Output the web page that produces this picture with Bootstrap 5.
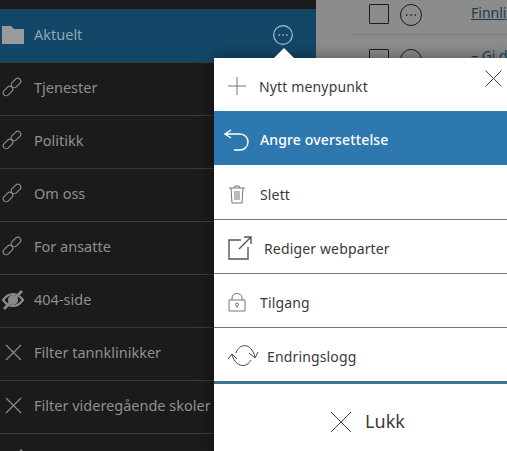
<!DOCTYPE html>
<html lang="no">
<head>
  <meta charset="UTF-8" />
  <meta name="viewport" content="width=device-width, initial-scale=1.0"/>
  <link href="https://cdn.jsdelivr.net/npm/bootstrap@5.3.1/dist/css/bootstrap.min.css" rel="stylesheet"/>
  <title>Meny</title>
  <style>
    html, body { height: 451px; overflow: hidden; }
    body { font-family: "Noto Sans", "Open Sans", sans-serif; font-size: 14px; background: #8c8c8c; }
    .page-wrap { height: 451px; position: relative; overflow: hidden; }

    .side-tree { width: 316px; flex: none; background: #1b1b1b; padding-top: 9px; height: 451px; }
    .tree-row { height: 53px; border-bottom: 1px solid #3a3a3a; color: #8f8f8f; padding: 0 0 3px 1px; font-size: 14.5px; }
    .tree-row.is-open { height: 54px; background: #124767; color: #8ea6b5; padding-bottom: 2px; }
    .tree-ico { width: 24px; height: 24px; flex: none; margin-right: 9px; fill: none; stroke: #8a8a8a; stroke-width: 1.4; }
    .link-ico { width: 20px; height: 20px; margin: 0 12px 2px 1px; stroke-width: 1.2; }
    .dots-ico { width: 20px; height: 20px; margin-left: auto; margin-right: 23px; fill: none; stroke: #a9bfcc; stroke-width: 1.2; }

    .back-list { flex: 1; padding: 4px 0 0 36px; color: #222; }
    .back-row { height: 31px; padding-left: 17px; border-bottom: 1px solid #7d7d7d; }
    .back-row + .back-row { height: 53px; padding-top: 14px; border-bottom: 0; }
    .back-check { width: 20px; height: 20px; border: 1px solid #1c1c1c; border-radius: 1px; flex: none; margin-right: 11px; }
    .back-ico { width: 22px; height: 22px; flex: none; fill: none; stroke: #1c1c1c; stroke-width: 1; }
    .back-link { color: #1d3c4f; margin-left: 49px; margin-top: -2px; white-space: nowrap; }
    .back-row + .back-row .back-link { margin-top: -4px; }

    .ctx-menu { position: absolute; left: 214px; top: 58px; width: 293px; height: 393px; background: #fff; color: #3a3a3a; box-shadow: 0 0 14px rgba(0, 0, 0, .45); }
    .ctx-menu::before { content: ""; position: absolute; left: 60px; top: -10px; border: 10px solid transparent; border-top: 0; border-bottom-color: #fff; }
    .ctx-item { height: 54px; border-bottom: 1px solid #777; padding: 3px 0 0 14px; letter-spacing: .15px; }
    .ctx-item.first { height: 53px; border-bottom: 0; }
    .ctx-item.active-item { background: #2d78ae; color: #fff; border-bottom: 0; font-weight: 500; }
    .ctx-item.slett-item { height: 55px; padding-top: 5px; }
    .ctx-item.last-item { border-bottom: 3px solid #3b7391; height: 56px; }
    .ctx-ico { flex: none; fill: none; stroke: #666; stroke-width: .9; }
    .active-item .ctx-ico { stroke: #fff; stroke-width: 1.4; }
    .ctx-close { position: absolute; right: 4px; top: 11px; width: 19px; height: 19px; padding: 0; border: 0; background: none; }
    .ctx-close svg, .lukk-btn svg { display: block; fill: none; stroke: #444; stroke-width: 1; }
    .lukk-btn { height: 67px; width: 100%; border: 0; background: #fff; color: #3a3a3a; font-size: 18px; padding: 8px 0 0 14px; gap: 13px; }
  </style>
</head>
<body>
  <div class="page-wrap d-flex">
    <div class="side-tree">
      <div class="tree-row is-open d-flex align-items-center">
        <svg class="tree-ico" viewBox="0 0 24 24" style="stroke:none;fill:#9a9a9a"><path d="M1 3h9l3 3h10v15H1z"/></svg>
        <span>Aktuelt</span>
        <svg class="dots-ico" viewBox="0 0 20 20"><circle cx="10" cy="10" r="9.300"/><path d="M5.500 10h1.400M9.300 10h1.400M13.100 10h1.400" stroke-width="1.600"/></svg>
      </div>
      <div class="tree-row d-flex align-items-center"><svg class="tree-ico link-ico" viewBox="0 0 20 20"><rect x="0.500" y="11" width="11" height="6" rx="3" transform="rotate(-45 6 14)"/><rect x="8.500" y="3" width="11" height="6" rx="3" transform="rotate(-45 14 6)"/></svg><span>Tjenester</span></div>
      <div class="tree-row d-flex align-items-center"><svg class="tree-ico link-ico" viewBox="0 0 20 20"><rect x="0.500" y="11" width="11" height="6" rx="3" transform="rotate(-45 6 14)"/><rect x="8.500" y="3" width="11" height="6" rx="3" transform="rotate(-45 14 6)"/></svg><span>Politikk</span></div>
      <div class="tree-row d-flex align-items-center"><svg class="tree-ico link-ico" viewBox="0 0 20 20"><rect x="0.500" y="11" width="11" height="6" rx="3" transform="rotate(-45 6 14)"/><rect x="8.500" y="3" width="11" height="6" rx="3" transform="rotate(-45 14 6)"/></svg><span>Om oss</span></div>
      <div class="tree-row d-flex align-items-center"><svg class="tree-ico link-ico" viewBox="0 0 20 20"><rect x="0.500" y="11" width="11" height="6" rx="3" transform="rotate(-45 6 14)"/><rect x="8.500" y="3" width="11" height="6" rx="3" transform="rotate(-45 14 6)"/></svg><span>For ansatte</span></div>
      <div class="tree-row d-flex align-items-center"><svg class="tree-ico" viewBox="0 0 24 24" style="stroke-width:2.200"><path d="M2 12c3-4 6-6 10-6s7 2 10 6c-3 4-6 6-10 6s-7-2-10-6z"/><circle cx="12" cy="12" r="4" fill="#8a8a8a"/><path d="M3 21L21 3" stroke-width="2.600"/></svg><span>404-side</span></div>
      <div class="tree-row d-flex align-items-center"><svg class="tree-ico" viewBox="0 0 24 24" style="stroke-width:1.200"><path d="M5 4l15 15M20 4L5 19"/></svg><span>Filter tannklinikker</span></div>
      <div class="tree-row d-flex align-items-center"><svg class="tree-ico" viewBox="0 0 24 24" style="stroke-width:1.200"><path d="M5 4l15 15M20 4L5 19"/></svg><span>Filter videregående skoler</span></div>
      <div class="tree-row d-flex align-items-center"><svg class="tree-ico" viewBox="0 0 24 24" style="stroke-width:2.200"><path d="M2 12c3-4 6-6 10-6s7 2 10 6c-3 4-6 6-10 6s-7-2-10-6z"/><path d="M3 21L21 3" stroke-width="2.600"/></svg><span></span></div>
    </div>

    <div class="back-list">
      <div class="back-row d-flex align-items-start">
        <div class="back-check"></div>
        <svg class="back-ico" viewBox="0 0 22 22"><circle cx="11" cy="11" r="10.500"/><path d="M6 11h1.400M10.300 11h1.400M14.600 11h1.400" stroke-width="1.600"/></svg>
        <a class="back-link" href="#">Finnli</a>
      </div>
      <div class="back-row d-flex align-items-start">
        <div class="back-check"></div>
        <svg class="back-ico" viewBox="0 0 22 22"><circle cx="11" cy="11" r="10.500"/></svg>
        <a class="back-link" href="#">– Gi d</a>
      </div>
    </div>

    <div class="ctx-menu">
      <button class="ctx-close" type="button" aria-label="Lukk"><svg width="19" height="19" viewBox="0 0 19 19"><path d="M1.500 1.500l16 16M17.500 1.500l-16 16"/></svg></button>
      <div class="ctx-item first d-flex align-items-center" style="gap:13px">
        <svg class="ctx-ico" width="18" height="18" viewBox="0 0 18 18"><path d="M9 0v18M0 9h18"/></svg><span>Nytt menypunkt</span>
      </div>
      <div class="ctx-item active-item d-flex align-items-center" style="gap:11px;padding-left:10px">
        <svg class="ctx-ico" width="25" height="22" viewBox="0 0 25 22"><path d="M7 1L1 5l6 4M1 5h15a8 8 0 0 1 0 16h-6"/></svg><span>Angre oversettelse</span>
      </div>
      <div class="ctx-item slett-item d-flex align-items-center" style="gap:14px">
        <svg class="ctx-ico" width="18" height="19" viewBox="0 0 18 19"><path d="M1 3h16M6 3l1-2h4l1 2M3 3l1 15h10l1-15M7 6v9M9 6v9M11 6v9"/></svg><span>Slett</span>
      </div>
      <div class="ctx-item d-flex align-items-center" style="gap:12px">
        <svg class="ctx-ico" width="24" height="24" viewBox="0 0 24 24" style="stroke-width:1.400;stroke:#555"><path d="M13 4H1v19h19V11M11 13L23 1M16 1h7v7"/></svg><span>Rediger webparter</span>
      </div>
      <div class="ctx-item d-flex align-items-center" style="gap:14px">
        <svg class="ctx-ico" width="18" height="20" viewBox="0 0 18 20"><path d="M1 8h16v11H1zM4 8V6c0-6 10-6 10 0v2"/><circle cx="9" cy="12.500" r="1.500"/><path d="M9 14v2"/></svg><span>Tilgang</span>
      </div>
      <div class="ctx-item last-item d-flex align-items-center" style="gap:8px;padding-left:13px">
        <svg class="ctx-ico" width="32" height="26" viewBox="0 0 32 26" style="stroke:#333"><path d="M9 10C12 0 24-1 28 14M22 10l6 5 3-6M24 17C20 25 9 25 5 12M1 16l4-5 5 5"/></svg><span>Endringslogg</span>
      </div>
      <button class="lukk-btn d-flex align-items-center justify-content-center" type="button">
        <svg width="22" height="22" viewBox="0 0 22 22"><path d="M1 1l20 20M21 1L1 21"/></svg><span>Lukk</span>
      </button>
    </div>
  </div>
  <script src="https://cdn.jsdelivr.net/npm/bootstrap@5.3.1/dist/js/bootstrap.bundle.min.js"></script>
</body>
</html>
